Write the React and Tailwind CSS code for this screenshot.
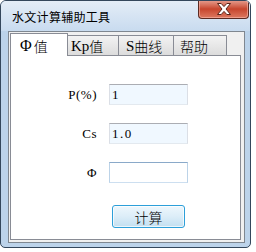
import React from 'react';

const SERIF = { fontFamily: '"Liberation Serif", "Noto Sans CJK SC", serif' };
const CJK = { fontFamily: '"Noto Sans CJK SC", "Liberation Sans", sans-serif' };

const tabs = [
    { key: 'phi', latin: 'Φ', cjk: '值', w: 'w-[58px]', pl: 'pl-[9px]' },
    { key: 'kp', latin: 'Kp', cjk: '值', w: 'w-[51px]', pl: 'pl-[3px]' },
    { key: 's', latin: 'S', cjk: '曲线', w: 'w-[55px]', pl: 'pl-[7px]' },
    { key: 'help', latin: '', cjk: '帮助', w: 'w-[53px]', pl: 'pl-[6px]' },
];

const fields = [
    { label: 'P(%)', value: '1', focus: false },
    { label: 'Cs', value: '1.0', focus: false },
    { label: 'Φ', value: '', focus: true },
];

const CloseGlyph = () => (
    <svg width="16" height="12" viewBox="0 0 16 12">
        <polygon
            points="1.5,0.5 5.2,0.5 8,3.6 10.8,0.5 14.5,0.5 10,6 14.5,11.5 10.8,11.5 8,8.4 5.2,11.5 1.5,11.5 6,6"
            fill="#ffffff"
            stroke="#5a2419"
            strokeWidth="1"
            strokeLinejoin="round"
        />
    </svg>
);

const App = () => {
    return (
        <div className="w-[256px] h-[252px] bg-white overflow-hidden">
            {/* window frame */}
            <div className="w-[251px] h-[248px] border border-[#34475c] rounded-t-[6px] rounded-b-[5px] bg-[#bcd3ea] flex flex-col overflow-hidden">
                {/* title bar */}
                <div className="h-[30px] flex bg-linear-to-b from-[#e4edf7] to-[#c8dbef]">
                    <div className="flex-1 flex items-center pl-[11px] pt-px text-[12px] text-black leading-none tracking-[0.3px]" style={CJK}>
                        水文计算辅助工具
                    </div>
                    <div className="w-[51px] h-[19px] mr-[1px] -mt-px flex items-center justify-center border border-t-0 border-[#5b2a22] rounded-b-[4px] bg-linear-to-b from-[#e6a092] via-[#c7452d] to-[#dc7860] shadow-[inset_0_0_0_1px_rgba(255,200,190,0.5)]">
                        <CloseGlyph />
                    </div>
                </div>

                {/* client area */}
                <div className="ml-[7px] w-[237px] h-[212px] border border-[#7f8790] bg-[#f0f0f0]">
                    <div className="ml-[1px] mt-px w-[231px]">
                        {/* tab strip */}
                        <div className="flex items-end h-[22px]">
                            {tabs.map((t, i) => (
                                <div
                                    key={t.key}
                                    className={
                                        i === 0
                                            ? `${t.w} ${t.pl} h-[23px] -mb-px relative z-10 bg-white border border-b-0 border-[#898c95] flex items-center pt-[1px] text-[14px] font-light leading-none`
                                            : `${t.w} ${t.pl} h-[20px] border border-l-0 border-b-0 border-[#898c95] bg-linear-to-b from-[#f3f3f3] to-[#dcdcdc] flex items-center pt-[1px] text-[14px] font-light leading-none`
                                    }
                                    style={CJK}
                                >
                                    {t.latin && (
                                        <span className={i === 0 ? 'text-[16px] mr-[2px]' : 'text-[15px]'} style={SERIF}>{t.latin}</span>
                                    )}
                                    <span>{t.cjk}</span>
                                </div>
                            ))}
                        </div>

                        {/* tab panel */}
                        <div className="h-[185px] bg-white border border-[#898c95] pt-[28px] flex flex-col">
                            {fields.map((f) => (
                                <div key={f.label} className="flex items-center h-[21px] mb-[18px]">
                                    <div className="w-[86px] text-right text-[13px] text-black leading-none tracking-[0.5px]" style={SERIF}>
                                        {f.label}
                                    </div>
                                    <div
                                        className={
                                            f.focus
                                                ? 'ml-[12px] w-[79px] h-[21px] bg-white border border-t-[#8aa9c9] border-x-[#bcd3e8] border-b-[#cddff0] flex items-center pl-[2px] text-[13px] leading-none tracking-[1.5px]'
                                                : 'ml-[12px] w-[79px] h-[21px] bg-[#f0f8ff] border border-t-[#abadb3] border-x-[#dbdfe6] border-b-[#e3e9ef] flex items-center pl-[2px] text-[13px] leading-none tracking-[1.5px]'
                                        }
                                        style={SERIF}
                                    >
                                        {f.value}
                                    </div>
                                </div>
                            ))}

                            <button
                                className="ml-[101px] mt-[4px] w-[73px] h-[23px] rounded-[3px] border border-[#2d9fd9] bg-linear-to-b from-[#eef7fc] via-[#dcedf8] to-[#c2dff0] shadow-[inset_0_0_0_1px_rgba(255,255,255,0.7)] flex items-center justify-center text-[14px] font-light text-black leading-none"
                                style={CJK}
                            >
                                计算
                            </button>
                        </div>
                    </div>
                </div>
            </div>
        </div>
    );
};

export default App;
